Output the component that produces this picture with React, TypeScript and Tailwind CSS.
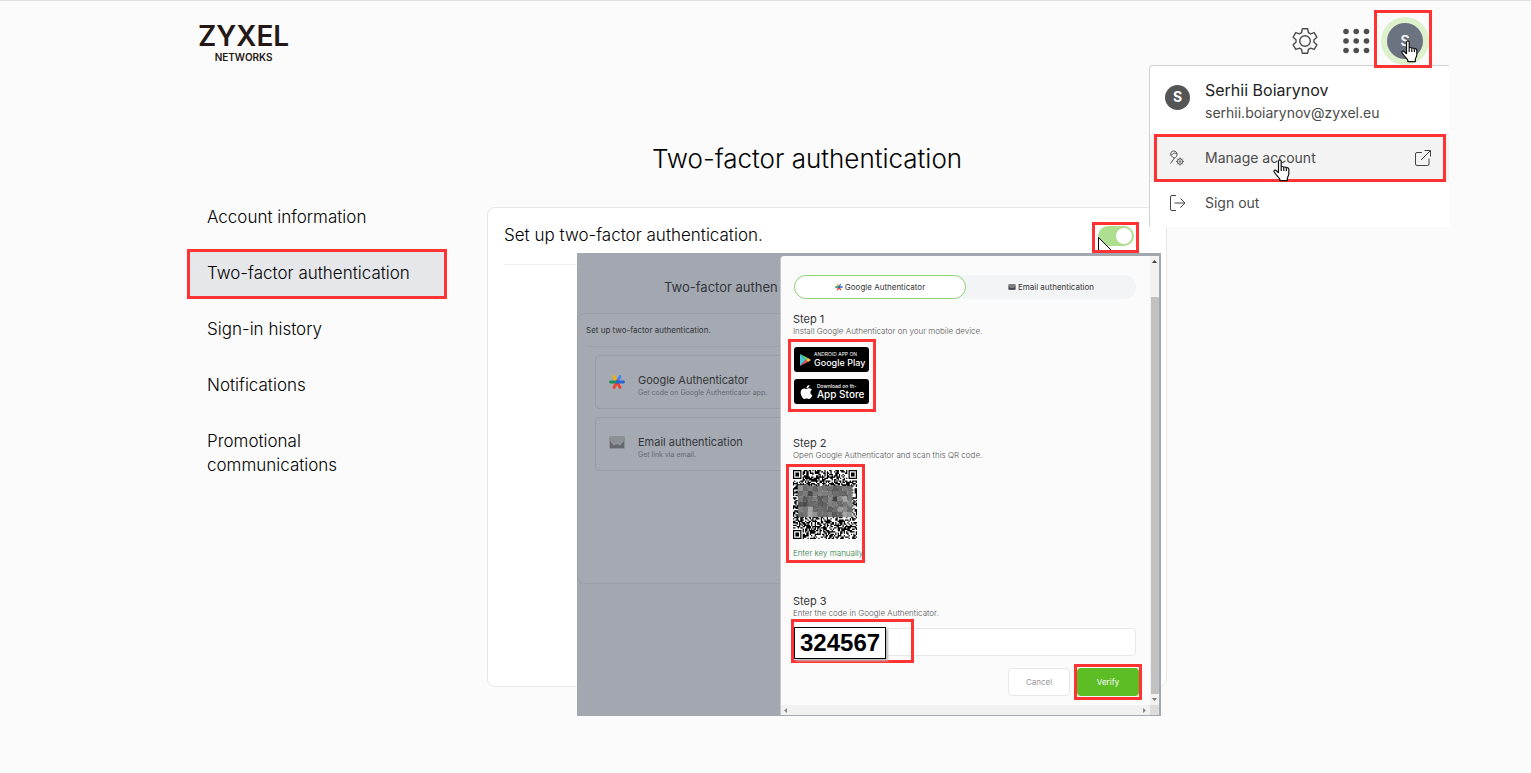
import React from "react";
import { FaApple } from "react-icons/fa";

const links = [
  "Account information",
  "Two-factor authentication",
  "Sign-in history",
  "Notifications",
  "Promotional communications",
];

const mosaic = [
  [150, 105, 120, 100, 125, 115, 110, 90, 100, 120, 110],
  [110, 125, 75, 120, 130, 125, 125, 110, 105, 100, 120],
  [120, 90, 110, 125, 90, 110, 135, 70, 130, 165, 125],
  [85, 75, 105, 110, 95, 100, 130, 125, 105, 120, 140],
  [130, 120, 165, 105, 110, 105, 95, 110, 150, 140, 110],
  [110, 115, 170, 145, 110, 110, 125, 90, 100, 165, 150],
];

const QR = 53;

const isDark = (x: number, y: number) => {
  const fx = x < 8 ? x : x > QR - 9 ? QR - 1 - x : -1;
  const fy = y < 8 ? y : y > QR - 9 ? QR - 1 - y : -1;
  const finder = fx >= 0 && fy >= 0 && !(x > QR - 9 && y > QR - 9);
  if (finder) {
    if (fx === 7 || fy === 7) return false;
    const d = Math.max(Math.abs(fx - 3), Math.abs(fy - 3));
    return d !== 2;
  }
  const n = Math.sin(x * 12.9898 + y * 78.233) * 43758.5453;
  return n - Math.floor(n) > 0.48;
};

const QrCode = () => {
  let d = "";
  for (let y = 0; y < QR; y++) {
    for (let x = 0; x < QR; x++) {
      if (isDark(x, y)) d += `M${x} ${y}h1v1h-1z`;
    }
  }
  return (
    <svg
      className="h-[69px] w-16"
      viewBox="0 0 53 53"
      preserveAspectRatio="none"
      role="img"
      aria-label="QR code"
    >
      <path d="M0 0h53v53H0z" fill="#fff" />
      <path d={d} fill="#000" />
      {mosaic.map((row, y) =>
        row.map((v, x) => (
          <rect
            key={`${x}-${y}`}
            x={4 + x * 4.1}
            y={12.2 + y * 4}
            width="4.2"
            height="4.1"
            fill={`rgb(${v},${v},${v})`}
          />
        ))
      )}
    </svg>
  );
};

// six teeth, each one rotated 60deg from the last
const gearPoints = Array.from({ length: 6 }, (_, i) => {
  const a = (i * Math.PI) / 3;
  const turn = (x: number, y: number) =>
    `${(x * Math.cos(a) - y * Math.sin(a)).toFixed(2)},${(x * Math.sin(a) + y * Math.cos(a)).toFixed(2)}`;
  return [turn(-3.4, -8.4), turn(-2.7, -12.2), turn(2.7, -12.2), turn(3.4, -8.4)].join(" ");
}).join(" ");

const Gear = () => (
  <svg className="h-[26px] w-[26px]" viewBox="-13 -13 26 26" fill="none" stroke="#4b4b4b" strokeWidth="1.400" strokeLinejoin="round">
    <polygon points={gearPoints} />
    <circle r="5.300" />
  </svg>
);

const Hand = ({ className }: { className: string }) => (
  <svg className={className} viewBox="0 0 18 23" fill="#fff" stroke="#111" strokeWidth="1.2" strokeLinejoin="round">
    <path d="M5.5 2.2C5.5.4 8.2.4 8.2 2.2v6c.4-1 2.4-.9 2.6.3.5-.8 2.4-.6 2.6.6.6-.7 2.4-.4 2.4 1.200v4.500c0 2.200-1.500 3.200-1.500 5v1.800H6.800v-1.500C5.800 18.500 3 16 1.200 13c-.8-1.500 1-2.500 2.200-1.300l2.100 2z" />
    <path d="M8.200 8.500v3.500M10.800 9v3M13.400 9.500v2.500" fill="none" />
  </svg>
);

const Spark = ({ className }: { className: string }) => (
  <svg className={className} viewBox="0 0 16 16" strokeWidth="2.8" strokeLinecap="round">
    <path d="M8 8 5 2.500" stroke="#f4b400" />
    <path d="M8 8l3-5.500" stroke="#4285f4" />
    <path d="M5 13.500 8 8l3 5.500" stroke="#ea4335" fill="none" />
    <path d="M1.500 8H8" stroke="#1e8e5a" />
    <path d="M8 8h6.500" stroke="#2b63d9" />
  </svg>
);

const Mail = ({ className }: { className: string }) => (
  <svg className={className} viewBox="0 0 16 13">
    <rect width="16" height="13" rx="1.500" fill="#7d7f83" />
    <path d="M1 12V4.500L5 9l3-1.500L11 9l4-4.500V12z" fill="#3c3f44" />
    <path d="M1 4.500 5 9l3-1.500L11 9l4-4.500" stroke="#aaa" strokeWidth=".5" fill="none" />
  </svg>
);

const ManageIcon = () => (
  <svg className="h-4 w-4" viewBox="0 0 16 16" fill="none" stroke="#555" strokeWidth="1">
    <path d="M2 5.500C1 3 2.500 1 4.500 1S8.500 2.500 8 5 5.500 8.500 4 7.500L2 5.500z" />
    <path d="M2 5C4 5 4 3 5 3s1.500 1 3 .5M5.500 8 1.500 13.500" />
    <circle cx="11" cy="11.500" r="2.700" />
    <circle cx="11" cy="11.500" r=".8" />
    <path d="M11 7.500v1.500M11 14v1.500M7 11.500h1.500M13.500 11.500H15M8.200 8.700l1 1M12.800 13.300l1 1M13.800 8.700l-1 1M9.200 13.300l-1 1" />
  </svg>
);

const SignOutIcon = () => (
  <svg className="h-4 w-4" viewBox="0 0 16 16" fill="none" stroke="#444" strokeWidth="1">
    <path d="M6 .5H2Q.5.5.5 2v12q0 1.500 1.500 1.500h4M4.500 8h10.500M10.500 3.500 15 8l-4.500 4.500" />
  </svg>
);

const ExternalIcon = () => (
  <svg className="h-4 w-4" viewBox="0 0 16 16" fill="none" stroke="#444" strokeWidth="1">
    <path d="M7 2.500H2q-1.500 0-1.500 1.500v10q0 1.500 1.500 1.500h10.500q1.500 0 1.500-1.500V8.500M9.500.5h6v6M15.500.5 6 10" />
  </svg>
);

const Header = () => (
  <header className="flex h-[82px] items-start justify-between border-t border-[#e0e0e0] pr-[99px] pl-[198px]">
    <a href="#" className="mt-[19px] flex flex-col items-center text-[#231815]">
      <span className="text-[28px] leading-8 font-semibold">ZYXEL</span>
      <span className="text-[10px] leading-[10px] font-semibold">NETWORKS</span>
    </a>
    <div className="relative mt-[9px] flex items-center">
      <button aria-label="Settings" className="mt-1 mr-[25px]">
        <Gear />
      </button>
      <button aria-label="Apps" className="mt-1 mr-1">
        <svg className="h-[26px] w-[27px]" viewBox="0 0 27 26" fill="#4d4d4d">
          {[3.5, 13, 22.5].map((y) =>
            [3, 13.2, 23.5].map((x) => <circle key={`${x}-${y}`} cx={x} cy={y} r="2.800" />)
          )}
        </svg>
      </button>
      <button
        aria-label="Account"
        className="relative z-30 flex h-[58px] w-[58px] overflow-hidden border-3 border-[#ff3333] pt-1 pl-1"
      >
        <span className="flex h-12 w-12 shrink-0 items-center justify-center rounded-full bg-[#ddf1cd]">
          <span className="flex h-9 w-9 items-center justify-center rounded-full bg-[#6b7280] text-sm font-semibold text-white">
            S
          </span>
        </span>
        <Hand className="absolute top-[27px] left-6 h-[23px] w-[18px]" />
      </button>
      <AccountMenu />
    </div>
  </header>
);

const AccountMenu = () => (
  <div className="absolute top-[55px] -right-[17px] z-20 w-[300px] rounded-tl border-t border-l border-[#d0d2d6] bg-white pb-[3px] text-[#4b4b4b]">
    <div className="flex h-[68px] items-center pl-[15px]">
      <span className="mt-[-6px] mr-[15px] flex h-[25px] w-[25px] items-center justify-center rounded-full bg-[#555] text-sm font-bold text-white">
        S
      </span>
      <div className="pt-0.5">
        <p className="text-base leading-6 text-[#222]">Serhii Boiarynov</p>
        <p className="text-sm leading-[22px]">serhii.boiarynov@zyxel.eu</p>
      </div>
    </div>
    <div className="bg-[#f3f3f3] pr-[3px] pl-1">
      <a href="#" className="relative flex h-12 items-center border-3 border-[#ff3333] px-3 text-sm">
        <ManageIcon />
        <span className="ml-5 flex-1">Manage account</span>
        <ExternalIcon />
        <Hand className="absolute top-[22px] left-[116px] h-[23px] w-[18px]" />
      </a>
    </div>
    <a href="#" className="flex h-[42px] items-center pl-5 text-sm">
      <SignOutIcon />
      <span className="ml-[19px]">Sign out</span>
    </a>
  </div>
);

const Sidebar = () => (
  <nav className="mt-[111px] flex w-[260px] shrink-0 flex-col gap-1.5 text-[17px] leading-6 font-light">
    {links.map((l) => (
      <a
        key={l}
        href="#"
        className={
          l === "Two-factor authentication"
            ? "border-3 border-[#ff3333] bg-[#e5e7eb] px-[17px] pt-[9px] pb-[11px]"
            : "border-3 border-transparent pt-[9px] pr-12 pb-[11px] pl-[17px]"
        }
      >
        {l}
      </a>
    ))}
  </nav>
);

const Option = ({ icon, title, text }: { icon: React.ReactNode; title: string; text: string }) => (
  <div className="flex h-[54px] w-[300px] items-center rounded border border-[#979ba3] pl-[13px]">
    {icon}
    <div className="ml-[13px] pt-2 whitespace-nowrap">
      <p className="text-[11px] leading-[14px] text-[#33363c]">{title}</p>
      <p className="text-[7px] leading-[12px] text-[#666a71]">{text}</p>
    </div>
  </div>
);

const StepTitle = ({ title, text }: { title: string; text: string }) => (
  <div className="whitespace-nowrap">
    <h3 className="text-[11px] leading-[14px] text-[#333]">{title}</h3>
    <p className="text-[8px] leading-[10px] font-light text-[#555]">{text}</p>
  </div>
);

const SetupDialog = () => (
  <div className="absolute top-[45px] left-[89px] z-10 flex h-[463px] w-[584px] overflow-hidden bg-[#a3a7af]">
    <div className="w-[203px] shrink-0 overflow-hidden">
      <h2 className="mt-[25px] ml-[87px] text-[13px] leading-[18px] whitespace-nowrap text-[#33363c]">
        Two-factor authen
      </h2>
      <div className="mt-[17px] h-[271px] w-[400px] rounded-lg border border-[#9b9fa7] bg-[#a5a9b1]">
        <p className="ml-2 h-[33px] border-b border-[#9da1a9] text-[8px] leading-[32px] text-[#33363c]">
          Set up two-factor authentication.
        </p>
        <div className="mt-2 ml-[17px] flex flex-col gap-2">
          <Option
            icon={<Spark className="h-4 w-4" />}
            title="Google Authenticator"
            text="Get code on Google Authenticator app."
          />
          <Option
            icon={<Mail className="mb-1 h-[13px] w-4 opacity-60" />}
            title="Email authentication"
            text="Get link via email."
          />
        </div>
      </div>
    </div>

    <div className="mt-[3px] mr-0.5 mb-px flex flex-1 flex-col rounded-tl border-l border-[#c4c7cc] bg-[#fbfbfb]">
      <div className="flex flex-1">
        <div className="flex-1 pt-[19px] pr-[13px] pl-3">
          <div className="mx-px flex h-6 rounded-full bg-[#f3f4f6] text-[8px] text-[#333]">
            <button className="flex flex-1 items-center justify-center gap-0.5 rounded-full border border-[#92d174] bg-white">
              <Spark className="h-2 w-2" />
              Google Authenticator
            </button>
            <button className="flex flex-1 items-center justify-center gap-0.5">
              <Mail className="h-1.5 w-2" />
              Email authentication
            </button>
          </div>

          <div className="mt-[13px]">
            <StepTitle title="Step 1" text="Install Google Authenticator on your mobile device." />
          </div>
          <div className="mt-[3px] -ml-[5px] flex h-[73px] w-[88px] flex-col gap-[7px] border-3 border-[#ff3333] pt-[5px] pl-[3px]">
            <a href="#" className="flex h-[25px] w-[75px] items-center rounded-[3px] bg-black pl-1.5 text-white">
              <svg className="h-3 w-[11px]" viewBox="0 0 11 12">
                <path d="M0 0v12l5.500-6z" fill="#48c8dc" />
                <path d="M0 0l5.500 6 2.500-2z" fill="#58d68a" />
                <path d="M8 4 5.500 6 8 8l3-2z" fill="#f7c94a" />
                <path d="M0 12l8-4-2.500-2z" fill="#ec5365" />
              </svg>
              <span className="ml-[3px] whitespace-nowrap">
                <span className="block text-[5px] leading-[6px]">ANDROID APP ON</span>
                <span className="block text-[9px] leading-[11px] font-medium">Google Play</span>
              </span>
            </a>
            <a href="#" className="flex h-[25px] w-[75px] items-center rounded-[3px] bg-black pl-1.5 text-white">
              <FaApple className="h-4 w-[13px]" />
              <span className="ml-1 whitespace-nowrap">
                <span className="block text-[5px] leading-[6px] font-medium">Download on th-</span>
                <span className="block text-[10px] leading-[11px] font-medium">App Store</span>
              </span>
            </a>
          </div>

          <div className="mt-6">
            <StepTitle title="Step 2" text="Open Google Authenticator and scan this QR code." />
          </div>
          <div className="mt-1 -ml-[7px] h-[99px] w-[79px] border-3 border-[#ff3333] pt-[3px] pl-1">
            <QrCode />
            <a href="#" className="mt-2 block text-[8px] leading-[12px] font-light whitespace-nowrap text-[#1f7a3c]">
              Enter key manually
            </a>
          </div>

          <div className="mt-[31px]">
            <StepTitle title="Step 3" text="Enter the code in Google Authenticator." />
          </div>
          <div className="relative mx-px mt-2.5">
            <input
              aria-label="Authenticator code"
              className="block h-7 w-full rounded border border-[#e5e7eb] bg-white px-2 text-sm"
            />
            <div className="absolute -top-[9px] -left-[3px] h-11 w-[123px] border-3 border-[#ff3333]" />
            <span className="absolute -top-px left-0 border border-black bg-white px-[5px] font-[Liberation_Sans] text-2xl leading-[30px] font-bold text-black shadow-[2px_2px_2px_#bbb]">
              324567
            </span>
          </div>
          <div className="mt-2 -mr-[5px] flex items-center justify-end gap-1 text-[8px]">
            <button className="h-7 w-[62px] rounded border border-[#e5e7eb] bg-white text-[#999]">Cancel</button>
            <div className="flex h-9 w-[68px] items-center justify-center border-3 border-[#ff3333]">
              <button className="h-7 w-full rounded-sm bg-[#5dbd25] text-white">Verify</button>
            </div>
          </div>
        </div>

        <div className="flex w-[9px] flex-col items-center bg-[#f1f1f1]">
          <svg className="mt-1 h-[3px] w-[5px]" viewBox="0 0 5 3" fill="#444">
            <path d="M0 3 2.500 0 5 3z" />
          </svg>
          <div className="mt-[34px] mb-1 w-2 flex-1 bg-[#c1c1c1]" />
          <svg className="mb-1 h-[3px] w-[5px]" viewBox="0 0 5 3" fill="#777">
            <path d="M0 0h5L2.500 3z" />
          </svg>
        </div>
      </div>
      <div className="flex h-2.5 items-center bg-[#f1f1f1]">
        <svg className="ml-[3px] h-[5px] w-[3px]" viewBox="0 0 3 5" fill="#888">
          <path d="M3 0v5L0 2.500z" />
        </svg>
        <svg className="mr-1 ml-auto h-[5px] w-[3px]" viewBox="0 0 3 5" fill="#888">
          <path d="M0 0v5l3-2.500z" />
        </svg>
        <span className="h-2.5 w-[9px] bg-[#dcdcdc]" />
      </div>
    </div>
  </div>
);

const App = () => {
  return (
    <div className="min-h-screen bg-[#fbfbfb] font-[Inter,sans-serif] text-black">
      <Header />
      <main className="flex gap-10 pl-[187px]">
        <Sidebar />
        <section className="mt-[61px] w-full max-w-[680px] pb-10">
          <h1 className="mr-10 mb-8 text-center text-[26px] leading-8 font-light">Two-factor authentication</h1>
          <div className="relative min-h-[480px] rounded-lg border border-[#e5e7eb] bg-white px-4">
            <div className="flex h-14 items-center justify-between">
              <label htmlFor="two-factor" className="text-[17px] font-light">
                Set up two-factor authentication.
              </label>
              <div className="relative mt-[3px] mr-[11px] h-[31px] w-[47px] overflow-hidden border-3 border-[#ff3333] pt-px pl-[3px]">
                <input
                  id="two-factor"
                  type="checkbox"
                  defaultChecked
                  className="relative block h-5 w-9 appearance-none rounded-full bg-[#aede90] before:absolute before:top-0.5 before:right-0.5 before:h-4 before:w-4 before:rounded-full before:bg-white"
                />
                <svg className="absolute top-3 left-[3px] h-[22px] w-4" viewBox="0 0 16 22" fill="#fff" stroke="#000">
                  <path d="M.5.5v18l4-4 3 7 3-1-3-7h6z" />
                </svg>
              </div>
            </div>
            <hr className="border-[#eceef0]" />
            <SetupDialog />
          </div>
        </section>
      </main>
    </div>
  );
};

export default App;
